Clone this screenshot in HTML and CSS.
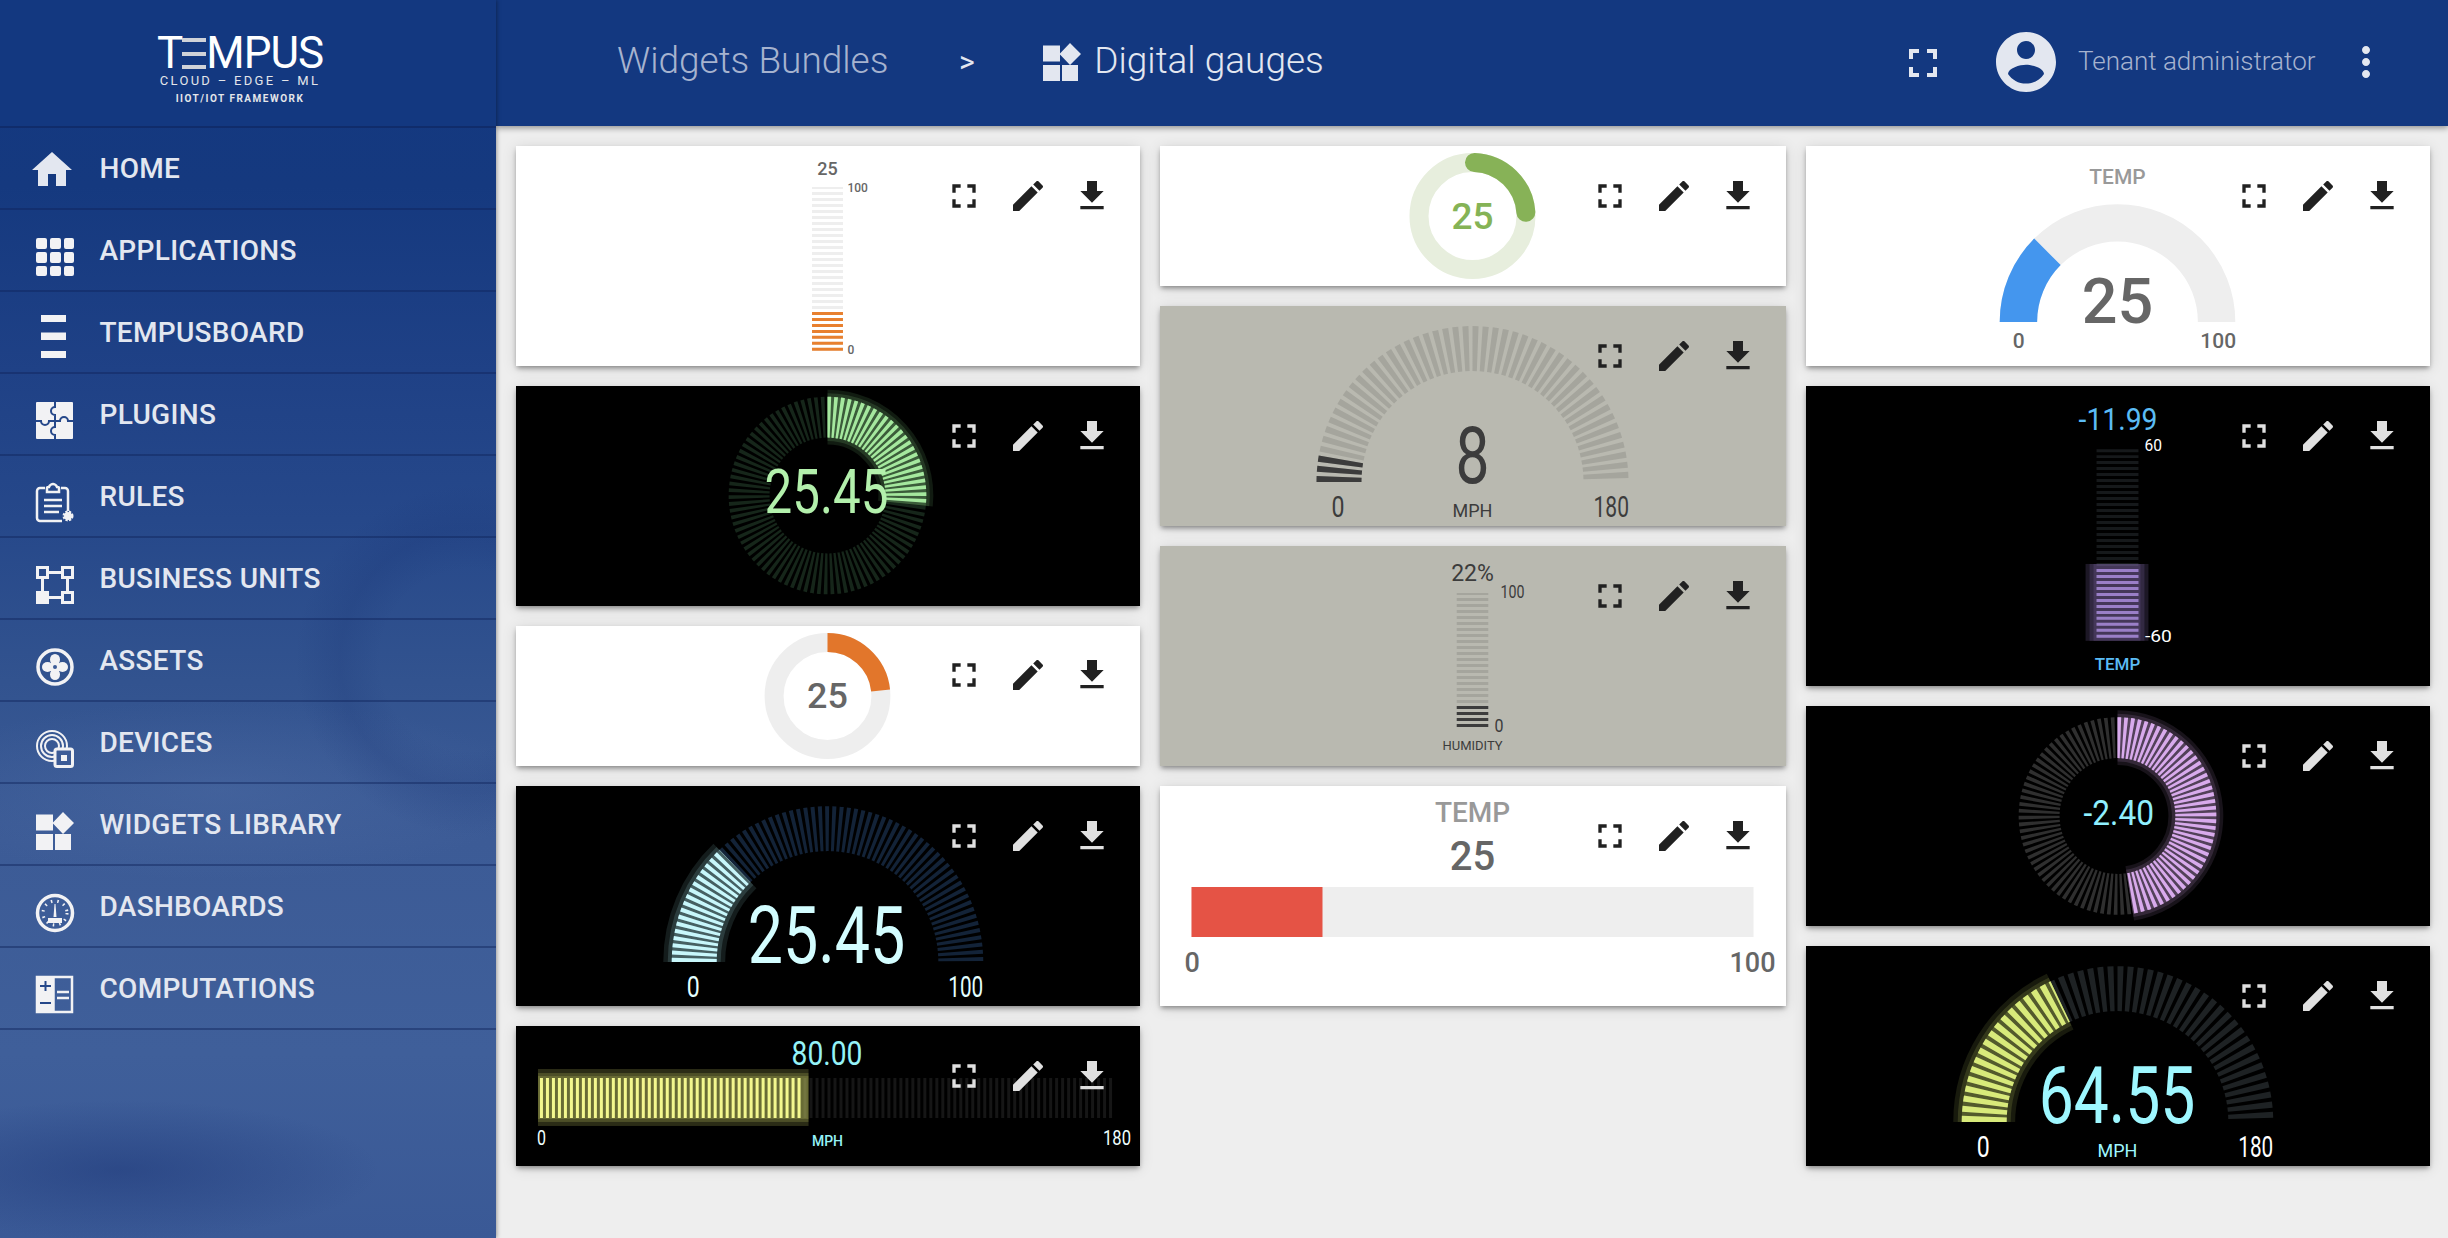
FILE: index.html
```html
<!DOCTYPE html>
<html lang="en">
<head>
    <meta charset="UTF-8">
    <meta name="viewport" content="width=device-width, initial-scale=1.0">
    <title>Digital gauges</title>
    <link rel="stylesheet" href="styles.css">
</head>
<body>
    <svg class="sprites" aria-hidden="true">
        <symbol id="i-fullscreen" viewBox="0 0 24 24"><path d="M7 14H5v5h5v-2H7v-3zm-2-4h2V7h3V5H5v5zm12 7h-3v2h5v-5h-2v3zM14 5v2h3v3h2V5h-5z"/></symbol>
        <symbol id="i-edit" viewBox="0 0 24 24"><path d="M3 17.25V21h3.75L17.81 9.94l-3.75-3.75L3 17.25zM20.71 7.04c.39-.39.39-1.02 0-1.41l-2.34-2.34c-.39-.39-1.02-.39-1.41 0l-1.83 1.83 3.75 3.75 1.83-1.83z"/></symbol>
        <symbol id="i-download" viewBox="0 0 24 24"><path d="M19 9h-4V3H9v6H5l7 7 7-7zM5 18v2h14v-2H5z"/></symbol>
        <symbol id="i-widgets" viewBox="0 0 38 38"><path d="M0 2.5h17v16H0zM27 0l11 11-11 11-10.500-11zM0 22h17v16H0zM19 22h16v16H19z"/></symbol>
    </svg>

    <div class="app">
        <aside class="sidebar">
            <div class="brand">
                <div class="brand-name">T<span class="brand-e">E</span>MPUS</div>
                <div class="brand-tag">CLOUD – EDGE – ML</div>
                <div class="brand-sub">IIOT/IOT FRAMEWORK</div>
            </div>
            <nav class="nav">
                <a class="nav-item">
                    <svg class="nav-icon nav-icon-home" viewBox="0 0 24 24"><path d="M10 20v-6h4v6h5v-8h3L12 3 2 12h3v8z"/></svg>
                    HOME
                </a>
                <a class="nav-item">
                    <svg class="nav-icon" viewBox="0 0 38 38"><path d="M2 0h7a2 2 0 0 1 2 2v7a2 2 0 0 1-2 2H2a2 2 0 0 1-2-2V2a2 2 0 0 1 2-2zM16 0h7a2 2 0 0 1 2 2v7a2 2 0 0 1-2 2h-7a2 2 0 0 1-2-2V2a2 2 0 0 1 2-2zM30 0h6a2 2 0 0 1 2 2v7a2 2 0 0 1-2 2h-6a2 2 0 0 1-2-2V2a2 2 0 0 1 2-2zM2 14h7a2 2 0 0 1 2 2v7a2 2 0 0 1-2 2H2a2 2 0 0 1-2-2v-7a2 2 0 0 1 2-2zM16 14h7a2 2 0 0 1 2 2v7a2 2 0 0 1-2 2h-7a2 2 0 0 1-2-2v-7a2 2 0 0 1 2-2zM30 14h6a2 2 0 0 1 2 2v7a2 2 0 0 1-2 2h-6a2 2 0 0 1-2-2v-7a2 2 0 0 1 2-2zM2 28h7a2 2 0 0 1 2 2v6a2 2 0 0 1-2 2H2a2 2 0 0 1-2-2v-6a2 2 0 0 1 2-2zM16 28h7a2 2 0 0 1 2 2v6a2 2 0 0 1-2 2h-7a2 2 0 0 1-2-2v-6a2 2 0 0 1 2-2zM30 28h6a2 2 0 0 1 2 2v6a2 2 0 0 1-2 2h-6a2 2 0 0 1-2-2v-6a2 2 0 0 1 2-2z"/></svg>
                    APPLICATIONS
                </a>
                <a class="nav-item">
                    <svg class="nav-icon" viewBox="0 0 38 38"><path d="M5-5h25V2H5zM5 12.500h25v7.500H5zM5 31h25v7H5z"/></svg>
                    TEMPUSBOARD
                </a>
                <a class="nav-item">
                    <svg class="nav-icon" viewBox="0 0 38 38">
                        <path d="M1 0h35a1 1 0 0 1 1 1v35a1 1 0 0 1-1 1H1a1 1 0 0 1-1-1V1a1 1 0 0 1 1-1z"/>
                        <path class="icon-cut" d="M19 0v5a4 4 0 1 0 0 8v6h-6a4 4 0 1 1-8 0H0M19 19h5a4 4 0 1 1 8 0h5M19 19v6a4 4 0 1 0 0 8v4"/>
                    </svg>
                    PLUGINS
                </a>
                <a class="nav-item">
                    <svg class="nav-icon" viewBox="0 0 38 38">
                        <path class="icon-line" d="M9 4H4a3 3 0 0 0-3 3v27a3 3 0 0 0 3 3h22M25 4h4a3 3 0 0 1 3 3v20M11 4c0-1 1-1 2-1 .5-2 3-3 4-3s3.500 1 4 3c1 0 2 0 2 1v4H11zM8 16h18M8 22h18M8 28h15"/>
                        <circle class="icon-dash" cx="32" cy="32" r="4"/>
                    </svg>
                    RULES
                </a>
                <a class="nav-item">
                    <svg class="nav-icon" viewBox="0 0 38 38">
                        <path class="icon-line icon-heavy" d="M1.500 1.500h10v10h-10zM26.500 1.500h10v10h-10zM26.500 26.500h10v10h-10zM12 6.500h14M6.500 12v14M31.500 12v14M12 31.500h14"/>
                        <path d="M0 25h13v13H0z"/>
                    </svg>
                    BUSINESS UNITS
                </a>
                <a class="nav-item">
                    <svg class="nav-icon" viewBox="0 0 38 38">
                        <circle class="icon-ring" cx="19" cy="19" r="17"/>
                        <ellipse cx="19" cy="11.500" rx="5" ry="5.500"/>
                        <ellipse cx="26.500" cy="19" rx="5.500" ry="5"/>
                        <ellipse cx="19" cy="26.500" rx="5" ry="5.500"/>
                        <ellipse cx="11.500" cy="19" rx="5.500" ry="5"/>
                        <path d="M15 15h8v8h-8z"/>
                        <circle class="icon-hub" cx="19" cy="19" r="2"/>
                    </svg>
                    ASSETS
                </a>
                <a class="nav-item">
                    <svg class="nav-icon" viewBox="0 0 38 38">
                        <circle class="icon-thin" cx="16" cy="16" r="15"/>
                        <circle class="icon-thin" cx="16" cy="16" r="11"/>
                        <circle class="icon-thin" cx="16" cy="16" r="7"/>
                        <rect class="icon-chip" x="19" y="19" width="17.500" height="17.500" rx="2"/>
                        <path d="M25 25h6v6h-6z"/>
                    </svg>
                    DEVICES
                </a>
                <a class="nav-item">
                    <svg class="nav-icon"><use href="#i-widgets"/></svg>
                    WIDGETS LIBRARY
                </a>
                <a class="nav-item">
                    <svg class="nav-icon" viewBox="0 0 38 38">
                        <circle class="icon-ring" cx="19" cy="19" r="17.500"/>
                        <circle class="icon-ticks" cx="19" cy="19" r="12"/>
                        <path d="M17.500 23l1-13h1l1 13zM12 24h14v5H12z"/>
                    </svg>
                    DASHBOARDS
                </a>
                <a class="nav-item">
                    <svg class="nav-icon" viewBox="0 0 38 38">
                        <path class="icon-line" d="M1 1h35v35H1zM17.500 1v35M1 19h16"/>
                        <path d="M2 2h15v16H2zM2 20h15v15H2z"/>
                        <path class="icon-cut" d="M4 10h11M9.500 5v10M4 27h11"/>
                        <path class="icon-line" d="M21 16h12M21 22h12"/>
                    </svg>
                    COMPUTATIONS
                </a>
            </nav>
        </aside>

        <div class="main">
            <header class="topbar">
                <span class="crumb">Widgets Bundles</span>
                <span class="crumb-sep">&gt;</span>
                <svg class="crumb-icon"><use href="#i-widgets"/></svg>
                <span class="crumb-current">Digital gauges</span>
                <svg class="top-icon top-fullscreen"><use href="#i-fullscreen"/></svg>
                <svg class="top-avatar" viewBox="0 0 24 24"><path d="M12 2C6.480 2 2 6.480 2 12s4.480 10 10 10 10-4.480 10-10S17.520 2 12 2zm0 3c1.660 0 3 1.340 3 3s-1.340 3-3 3-3-1.340-3-3 1.340-3 3-3zm0 14.200c-2.500 0-4.710-1.280-6-3.220.030-1.990 4-3.080 6-3.080 1.990 0 5.970 1.090 6 3.080-1.290 1.940-3.500 3.220-6 3.220z"/></svg>
                <span class="user-name">Tenant administrator</span>
                <svg class="top-icon top-more" viewBox="0 0 24 24"><path d="M12 8c1.100 0 2-.9 2-2s-.9-2-2-2-2 .9-2 2 .9 2 2 2zm0 2c-1.100 0-2 .9-2 2s.9 2 2 2 2-.9 2-2-.9-2-2-2zm0 6c-1.100 0-2 .9-2 2s.9 2 2 2 2-.9 2-2-.9-2-2-2z"/></svg>
            </header>

            <div class="board">
                <div class="column">
                    <!-- vertical bar, white -->
                    <div class="card card-light h220 tone-orange">
                        <svg class="gauge" viewBox="0 0 625 220">
                            <line class="ticks off" x1="312" y1="205" x2="312" y2="41" style="stroke-width:31"/>
                            <line class="ticks on" x1="312" y1="205" x2="312" y2="163" style="stroke-width:31"/>
                            <text class="num t18 mid" x="312" y="29">25</text>
                            <text class="num t12" x="332" y="46">100</text>
                            <text class="num t12" x="332" y="208">0</text>
                        </svg>
                        <div class="actions"><svg><use href="#i-fullscreen"/></svg><svg><use href="#i-edit"/></svg><svg><use href="#i-download"/></svg></div>
                    </div>

                    <!-- ring, green -->
                    <div class="card card-dark h220 tone-green">
                        <svg class="gauge ring" viewBox="0 0 625 220">
                            <path class="track off" d="M312 31a78.500 78.500 0 1 1-.01 0z" pathLength="360"/>
                            <path class="glow glow-a" d="M312 31A78.500 78.500 0 0 1 390.070 117.700"/>
                            <path class="glow glow-b" d="M312 31A78.500 78.500 0 0 1 390.070 117.700"/>
                            <path class="glow glow-c" d="M312 31A78.500 78.500 0 0 1 390.070 117.700"/>
                            <path class="track on" d="M312 31A78.500 78.500 0 0 1 390.070 117.700" pathLength="96"/>
                            <text class="lcd t62 value" x="249" y="127" textLength="124" lengthAdjust="spacingAndGlyphs">25.45</text>
                        </svg>
                        <div class="actions"><svg><use href="#i-fullscreen"/></svg><svg><use href="#i-edit"/></svg><svg><use href="#i-download"/></svg></div>
                    </div>

                    <!-- donut, orange -->
                    <div class="card card-light h140 tone-donut">
                        <svg class="gauge" viewBox="0 0 625 140">
                            <circle class="solid off donut" cx="312" cy="70" r="53.500"/>
                            <path class="solid on donut" d="M312 16.500A53.500 53.500 0 0 1 365.200 64.400"/>
                            <text class="num t36 mid" x="312" y="82">25</text>
                        </svg>
                        <div class="actions actions-low"><svg><use href="#i-fullscreen"/></svg><svg><use href="#i-edit"/></svg><svg><use href="#i-download"/></svg></div>
                    </div>

                    <!-- arc, ice blue -->
                    <div class="card card-dark h220 tone-ice">
                        <svg class="gauge arc" viewBox="0 0 625 220">
                            <path class="track off dense" d="M178.500 176A133.500 133.500 0 0 1 445.500 176" pathLength="180"/>
                            <path class="glow glow-a" d="M178.500 176A133.500 133.500 0 0 1 219.260 79.970"/>
                            <path class="glow glow-b" d="M178.500 176A133.500 133.500 0 0 1 219.260 79.970"/>
                            <path class="glow glow-c" d="M178.500 176A133.500 133.500 0 0 1 219.260 79.970"/>
                            <path class="track on dense" d="M178.500 176A133.500 133.500 0 0 1 219.260 79.970" pathLength="46"/>
                            <text class="lcd t80 value" x="232" y="177" textLength="158" lengthAdjust="spacingAndGlyphs">25.45</text>
                            <text class="lcd t29 scale" x="171" y="211" textLength="13" lengthAdjust="spacingAndGlyphs">0</text>
                            <text class="lcd t29 scale" x="433" y="211" textLength="35" lengthAdjust="spacingAndGlyphs">100</text>
                        </svg>
                        <div class="actions"><svg><use href="#i-fullscreen"/></svg><svg><use href="#i-edit"/></svg><svg><use href="#i-download"/></svg></div>
                    </div>

                    <!-- horizontal bar, yellow -->
                    <div class="card card-dark h140 tone-yellow">
                        <svg class="gauge" viewBox="0 0 625 140">
                            <line class="ticks off" x1="24" y1="72" x2="599" y2="72" style="stroke-width:40"/>
                            <rect class="glow-box" x="22" y="43" width="271" height="57"/>
                            <rect class="glow-box" x="22" y="47" width="271" height="49"/>
                            <rect class="glow-box" x="22" y="50" width="271" height="43"/>
                            <line class="ticks on" x1="24" y1="72" x2="288" y2="72" style="stroke-width:40"/>
                            <text class="lcd t34 value" x="276" y="38.500" textLength="71" lengthAdjust="spacingAndGlyphs">80.00</text>
                            <text class="lcd t21 scale" x="21" y="119" textLength="9" lengthAdjust="spacingAndGlyphs">0</text>
                            <text class="lcd t21 scale" x="588" y="119" textLength="28" lengthAdjust="spacingAndGlyphs">180</text>
                            <text class="num t14 mid unit" x="312" y="120">MPH</text>
                        </svg>
                        <div class="actions"><svg><use href="#i-fullscreen"/></svg><svg><use href="#i-edit"/></svg><svg><use href="#i-download"/></svg></div>
                    </div>
                </div>

                <div class="column">
                    <!-- rounded donut, green -->
                    <div class="card card-light h140 tone-lime">
                        <svg class="gauge" viewBox="0 0 625 140">
                            <circle class="solid off donut" cx="312" cy="70" r="53.500"/>
                            <path class="solid on donut round" d="M314 16.500A53.500 53.500 0 0 1 365.370 66.270"/>
                            <text class="num t37 mid value" x="312" y="83">25</text>
                        </svg>
                        <div class="actions"><svg><use href="#i-fullscreen"/></svg><svg><use href="#i-edit"/></svg><svg><use href="#i-download"/></svg></div>
                    </div>

                    <!-- arc, lcd gray -->
                    <div class="card card-gray h220 tone-gray">
                        <svg class="gauge arc" viewBox="0 0 625 220">
                            <path class="track off wide" d="M178.500 176A133.500 133.500 0 0 1 445.500 176" pathLength="180"/>
                            <path class="track on wide" d="M178.500 176A133.500 133.500 0 0 1 181.060 149.950" pathLength="11.250"/>
                            <text class="lcd t79 value" x="295" y="176.700" textLength="34" lengthAdjust="spacingAndGlyphs">8</text>
                            <text class="lcd t29 value" x="171" y="210.700" textLength="13" lengthAdjust="spacingAndGlyphs">0</text>
                            <text class="lcd t29 value" x="433" y="210.700" textLength="35.500" lengthAdjust="spacingAndGlyphs">180</text>
                            <text class="plain t18 mid value" x="312" y="211">MPH</text>
                        </svg>
                        <div class="actions"><svg><use href="#i-fullscreen"/></svg><svg><use href="#i-edit"/></svg><svg><use href="#i-download"/></svg></div>
                    </div>

                    <!-- vertical bar, lcd gray -->
                    <div class="card card-gray h220 tone-gray">
                        <svg class="gauge" viewBox="0 0 625 220">
                            <line class="ticks off" x1="312" y1="181" x2="312" y2="47" style="stroke-width:31.500"/>
                            <line class="ticks on" x1="312" y1="181" x2="312" y2="157" style="stroke-width:31.500"/>
                            <text class="plain t23 mid value" x="312" y="34.700">22%</text>
                            <text class="lcd t19 value" x="340" y="51.700" textLength="24" lengthAdjust="spacingAndGlyphs">100</text>
                            <text class="lcd t19 value" x="334" y="185.700" textLength="9" lengthAdjust="spacingAndGlyphs">0</text>
                            <text class="plain t13 mid value" x="312" y="204">HUMIDITY</text>
                        </svg>
                        <div class="actions"><svg><use href="#i-fullscreen"/></svg><svg><use href="#i-edit"/></svg><svg><use href="#i-download"/></svg></div>
                    </div>

                    <!-- progress bar -->
                    <div class="card card-light h220">
                        <svg class="gauge" viewBox="0 0 625 220">
                            <rect class="bar-track" x="31" y="101" width="562" height="50"/>
                            <rect class="bar-fill" x="31" y="101" width="131" height="50"/>
                            <text class="num t28 mid title" x="312" y="35.700">TEMP</text>
                            <text class="num t40 mid" x="312" y="84">25</text>
                            <text class="num t27" x="24" y="186">0</text>
                            <text class="num t27" x="569" y="186">100</text>
                        </svg>
                        <div class="actions"><svg><use href="#i-fullscreen"/></svg><svg><use href="#i-edit"/></svg><svg><use href="#i-download"/></svg></div>
                    </div>
                </div>

                <div class="column">
                    <!-- solid arc, blue -->
                    <div class="card card-light h220 tone-blue">
                        <svg class="gauge" viewBox="0 0 625 220">
                            <path class="solid off blue-arc" d="M212.750 176A99.250 99.250 0 0 1 411.250 176"/>
                            <path class="solid on blue-arc" d="M212.750 176A99.250 99.250 0 0 1 241.820 105.820"/>
                            <text class="num t21 mid title" x="312" y="38">TEMP</text>
                            <text class="num t63 mid" x="312" y="177">25</text>
                            <text class="num t21" x="207" y="202.500">0</text>
                            <text class="num t21" x="395" y="202.500">100</text>
                        </svg>
                        <div class="actions"><svg><use href="#i-fullscreen"/></svg><svg><use href="#i-edit"/></svg><svg><use href="#i-download"/></svg></div>
                    </div>

                    <!-- vertical bar, purple -->
                    <div class="card card-dark h300 tone-purple">
                        <svg class="gauge" viewBox="0 0 625 300">
                            <line class="ticks off" x1="312" y1="252" x2="312" y2="63" style="stroke-width:42"/>
                            <rect class="glow-box" x="280" y="178" width="63" height="77"/>
                            <rect class="glow-box" x="284" y="178" width="55" height="77"/>
                            <rect class="glow-box" x="288" y="178" width="47" height="77"/>
                            <line class="ticks on" x1="312" y1="252" x2="312" y2="180" style="stroke-width:42"/>
                            <text class="lcd t31 sky" x="273" y="44" textLength="79" lengthAdjust="spacingAndGlyphs">-11.99</text>
                            <text class="lcd t17 scale" x="339" y="64.700" textLength="17.500" lengthAdjust="spacingAndGlyphs">60</text>
                            <text class="lcd t17 scale" x="339.500" y="256.500" textLength="27" lengthAdjust="spacingAndGlyphs">-60</text>
                            <text class="num t17 mid sky" x="312" y="284">TEMP</text>
                        </svg>
                        <div class="actions"><svg><use href="#i-fullscreen"/></svg><svg><use href="#i-edit"/></svg><svg><use href="#i-download"/></svg></div>
                    </div>

                    <!-- ring, pink -->
                    <div class="card card-dark h220 tone-pink">
                        <svg class="gauge ring" viewBox="0 0 625 220">
                            <path class="track off" d="M312 31.500a78.500 78.500 0 1 1-.01 0z" pathLength="360"/>
                            <path class="glow glow-a" d="M312 31.500A78.500 78.500 0 0 1 324.280 187.530"/>
                            <path class="glow glow-b" d="M312 31.500A78.500 78.500 0 0 1 324.280 187.530"/>
                            <path class="glow glow-c" d="M312 31.500A78.500 78.500 0 0 1 324.280 187.530"/>
                            <path class="track on" d="M312 31.500A78.500 78.500 0 0 1 324.280 187.530" pathLength="171"/>
                            <text class="lcd t35 value" x="278" y="119" textLength="70.500" lengthAdjust="spacingAndGlyphs">-2.40</text>
                        </svg>
                        <div class="actions"><svg><use href="#i-fullscreen"/></svg><svg><use href="#i-edit"/></svg><svg><use href="#i-download"/></svg></div>
                    </div>

                    <!-- arc, lime -->
                    <div class="card card-dark h220 tone-olive">
                        <svg class="gauge arc" viewBox="0 0 625 220">
                            <path class="track off wide" d="M178.500 176A133.500 133.500 0 0 1 445.500 176" pathLength="180"/>
                            <path class="glow glow-a" d="M178.500 176A133.500 133.500 0 0 1 254.530 55.500"/>
                            <path class="glow glow-b" d="M178.500 176A133.500 133.500 0 0 1 254.530 55.500"/>
                            <path class="glow glow-c" d="M178.500 176A133.500 133.500 0 0 1 254.530 55.500"/>
                            <path class="track on wide" d="M178.500 176A133.500 133.500 0 0 1 254.530 55.500" pathLength="64.500"/>
                            <text class="lcd t79 value" x="233" y="176.700" textLength="157" lengthAdjust="spacingAndGlyphs">64.55</text>
                            <text class="lcd t29 scale" x="171" y="210.700" textLength="13" lengthAdjust="spacingAndGlyphs">0</text>
                            <text class="lcd t29 scale" x="433" y="210.700" textLength="35" lengthAdjust="spacingAndGlyphs">180</text>
                            <text class="plain t18 mid value" x="312" y="211">MPH</text>
                        </svg>
                        <div class="actions"><svg><use href="#i-fullscreen"/></svg><svg><use href="#i-edit"/></svg><svg><use href="#i-download"/></svg></div>
                    </div>
                </div>
            </div>
        </div>
    </div>
</body>
</html>
```

FILE: styles.css
```css
body {
    margin: 0;
    font-family: Roboto, "Liberation Sans", sans-serif;
    background-color: #eeeeee;
    overflow: hidden;
}

.sprites {
    display: none;
}

.app {
    display: flex;
    height: 100vh;
}

/* sidebar */

.sidebar {
    flex: none;
    width: 496px;
    position: relative;
    z-index: 2;
    box-shadow: 1px 0 4px rgba(0, 0, 0, 0.35);
    background-color: #133880;
    background-image:
        radial-gradient(circle at 470px 660px, transparent 90px, rgba(20, 45, 110, 0.16) 130px, transparent 175px),
        radial-gradient(ellipse 320px 90px at 220px 790px, rgba(90, 120, 175, 0.28), transparent),
        radial-gradient(ellipse 260px 70px at 120px 1170px, rgba(25, 50, 115, 0.45), transparent),
        linear-gradient(180deg, #133880 0, #15397f 15%, #1f4186 30%, #26488a 42%, #32538f 55%, #3c5b96 68%, #3f5f9a 85%, #3a5996 100%);
}

.brand {
    height: 126px;
    border-bottom: 2px solid rgba(15, 35, 90, 0.55);
    background-color: #133880;
    color: #fff;
    text-align: center;
    padding-right: 16px;
}

.brand-name {
    padding-top: 38px;
    font-size: 44px;
    line-height: 31px;
    height: 31px;
    letter-spacing: -1px;
}

.brand-e {
    display: inline-block;
    height: 31px;
    color: transparent;
    background: linear-gradient(180deg, #cfd2d8 0 4px, transparent 4px 13.5px, #cfd2d8 13.5px 17.5px, transparent 17.5px 27px, #cfd2d8 27px 31px);
}

.brand-tag {
    margin-top: 5px;
    font-size: 13px;
    line-height: 14px;
    letter-spacing: 2.3px;
    color: #e4e6ea;
}

.brand-sub {
    margin-top: 5px;
    font-size: 10px;
    line-height: 11px;
    font-weight: 700;
    letter-spacing: 1.5px;
    color: #e4e6ea;
}

.nav-item {
    display: flex;
    align-items: center;
    height: 82px;
    box-sizing: border-box;
    border-bottom: 2px solid rgba(15, 35, 90, 0.45);
    padding-left: 36px;
    gap: 25.5px;
    font-size: 28px;
    font-weight: 500;
    letter-spacing: 0.3px;
    color: #e3e7f0;
}

.nav-icon {
    flex: none;
    width: 38px;
    height: 38px;
    margin-top: 13px;
    fill: #f2f2f4;
    overflow: visible;
}

.nav-icon-home {
    width: 48px;
    height: 48px;
    margin: 4px -2px 0 -8px;
    fill: #e3e7f0;
}

.icon-cut {
    fill: none;
    stroke: #26488a;
    stroke-width: 2;
}

.icon-line {
    fill: none;
    stroke: #f2f2f4;
    stroke-width: 2.5;
}

.icon-heavy {
    stroke-width: 3;
}

.icon-ring {
    fill: none;
    stroke: #f2f2f4;
    stroke-width: 3.5;
}

.icon-thin {
    fill: none;
    stroke: #f2f2f4;
    stroke-width: 2;
}

.icon-chip {
    fill: #3c5b96;
    stroke: #f2f2f4;
    stroke-width: 3;
}

.icon-hub {
    fill: #3c5b96;
}

.icon-dash {
    fill: #f2f2f4;
    stroke: #f2f2f4;
    stroke-width: 3;
    stroke-dasharray: 2 1.2;
}

.icon-ticks {
    fill: none;
    stroke: #f2f2f4;
    stroke-width: 3;
    stroke-dasharray: 1.5 5;
}

/* top bar */

.main {
    flex: 1;
    min-width: 0;
    display: flex;
    flex-direction: column;
}

.topbar {
    flex: none;
    height: 124px;
    padding-bottom: 2px;
    display: flex;
    align-items: center;
    padding-left: 121px;
    background-color: #133880;
    box-shadow: 0 2px 6px rgba(0, 0, 0, 0.4);
    position: relative;
    z-index: 1;
}

.crumb {
    margin-bottom: 4px;
    font-size: 37px;
    font-weight: 300;
    color: #a6b3cf;
}

.crumb-sep {
    margin-left: 70.5px;
    margin-bottom: 2px;
    font-size: 30px;
    color: #e3e7f0;
}

.crumb-icon {
    flex: none;
    width: 38px;
    height: 38px;
    margin-left: 68.5px;
    fill: #e3e7f0;
}

.crumb-current {
    margin-left: 13px;
    margin-bottom: 4px;
    font-size: 37px;
    font-weight: 300;
    color: #e3e7f0;
}

.top-icon {
    flex: none;
    width: 48px;
    height: 48px;
    fill: #e3e7f0;
}

.top-fullscreen {
    margin-left: auto;
    margin-top: 2px;
}

.top-avatar {
    flex: none;
    width: 72px;
    height: 72px;
    margin-left: 42.5px;
    fill: #e3e7f0;
}

.user-name {
    margin-left: 16px;
    margin-bottom: 2px;
    font-size: 26px;
    font-weight: 300;
    color: #a6b3cf;
}

.top-more {
    margin-left: 26.5px;
    margin-right: 58px;
}

/* widget cards */

.board {
    flex: 1;
    display: grid;
    grid-template-columns: 624px 626px 624px;
    gap: 20px;
    padding: 20px 18px 0 20px;
}

.column {
    min-width: 0;
    display: flex;
    flex-direction: column;
    gap: 20px;
}

.card {
    position: relative;
    box-shadow: 0 3px 5px -1px rgba(0, 0, 0, 0.4), 0 2px 14px rgba(0, 0, 0, 0.12);
}

.h140 {
    height: 140px;
}

.h220 {
    height: 220px;
}

.h300 {
    height: 300px;
}

.card-light {
    background-color: #fff;
    fill: #666;
}

.card-dark {
    background-color: #000;
}

.card-gray {
    background-color: #b9b9b0;
}

.actions {
    position: absolute;
    top: 30px;
    right: 28px;
    display: flex;
    gap: 24px;
}

.actions-low {
    top: 29px;
}

.actions svg {
    display: block;
    width: 40px;
    height: 40px;
    fill: #212121;
}

.card-dark .actions svg {
    fill: #e0e0e0;
}

/* gauges are drawn on a free canvas the size of the card */

.gauge {
    display: block;
    width: 100%;
    height: 100%;
}

.track,
.ticks,
.glow,
.solid {
    fill: none;
}

.off {
    stroke: var(--off);
}

.on {
    stroke: var(--on);
}

.ticks {
    stroke-dasharray: 3 3;
}

.glow {
    stroke: var(--glow);
}

.glow-box {
    fill: var(--glow);
    opacity: 0.2;
}

.ring .track {
    stroke-width: 41;
    stroke-dasharray: 2.2 1.8;
}

.ring .glow-a {
    stroke-width: 55;
    opacity: 0.12;
}

.ring .glow-b {
    stroke-width: 48;
    opacity: 0.16;
}

.ring .glow-c {
    stroke-width: 41;
    opacity: 0.22;
}

.arc .track {
    stroke-width: 45;
}

.arc .dense {
    stroke-dasharray: 1.5 1.2;
}

.arc .wide {
    stroke-dasharray: 2.25 1.5;
}

.arc .glow-a {
    stroke-width: 62;
    opacity: 0.12;
}

.arc .glow-b {
    stroke-width: 53;
    opacity: 0.16;
}

.arc .glow-c {
    stroke-width: 45;
    opacity: 0.22;
}

.donut {
    stroke-width: 19;
}

.round {
    stroke-linecap: round;
}

.blue-arc {
    stroke-width: 37.5;
}

.bar-track {
    fill: #eeeeee;
}

.bar-fill {
    fill: #e55345;
}

/* colour sets */

.tone-orange {
    --off: #eeeeee;
    --on: #e8802f;
}

.tone-donut {
    --off: #eeeeee;
    --on: #e2762b;
}

.tone-lime {
    --off: #e7eedd;
    --on: #87b257;
    --text: #85b356;
}

.tone-blue {
    --off: #eeeeee;
    --on: #4496ee;
}

.tone-green {
    --off: #16261a;
    --on: #a5e89e;
    --glow: #8fdc8a;
    --text: #b3f0ac;
}

.tone-ice {
    --off: #132338;
    --on: #c8f7fb;
    --glow: #a8e4ea;
    --text: #d3fdff;
    --scale: #e4ffff;
}

.tone-yellow {
    --off: #161616;
    --on: #f3f78e;
    --glow: #d8dc70;
    --text: #95f2f7;
    --scale: #f0ffff;
    --unit: #95f2f7;
}

.tone-gray {
    --off: #a5a59d;
    --on: #3c3c3c;
    --text: #3c3c3c;
}

.tone-purple {
    --off: #16191b;
    --on: #9a7fc8;
    --glow: #8e75b8;
    --scale: #ffffff;
}

.tone-pink {
    --off: #2f2f2f;
    --on: #d8aaec;
    --glow: #c49ad8;
    --text: #90f0ff;
}

.tone-olive {
    --off: #1e2224;
    --on: #d8ea7a;
    --glow: #c4d868;
    --text: #9ef7ff;
    --scale: #ffffff;
}

/* gauge text */

.lcd {
    font-family: Roboto, sans-serif;
    font-weight: 400;
}

.num {
    font-family: Roboto, sans-serif;
    font-weight: 500;
}

.plain {
    font-family: Roboto, sans-serif;
    font-weight: 400;
}

.mid {
    text-anchor: middle;
}

.value {
    fill: var(--text);
}

.scale {
    fill: var(--scale);
}

.unit {
    fill: var(--unit);
}

.title {
    fill: #999999;
}

.sky {
    fill: #5bbcf5;
}

.t12 { font-size: 12px; }
.t13 { font-size: 13px; }
.t14 { font-size: 14px; }
.t17 { font-size: 17px; }
.t18 { font-size: 18px; }
.t19 { font-size: 19px; }
.t21 { font-size: 21px; }
.t23 { font-size: 23px; }
.t27 { font-size: 27px; }
.t28 { font-size: 28px; }
.t29 { font-size: 29px; }
.t31 { font-size: 31px; }
.t34 { font-size: 34px; }
.t35 { font-size: 35px; }
.t36 { font-size: 36px; }
.t37 { font-size: 37px; }
.t40 { font-size: 40px; }
.t62 { font-size: 62px; }
.t63 { font-size: 63px; }
.t79 { font-size: 79px; }
.t80 { font-size: 80px; }
```
